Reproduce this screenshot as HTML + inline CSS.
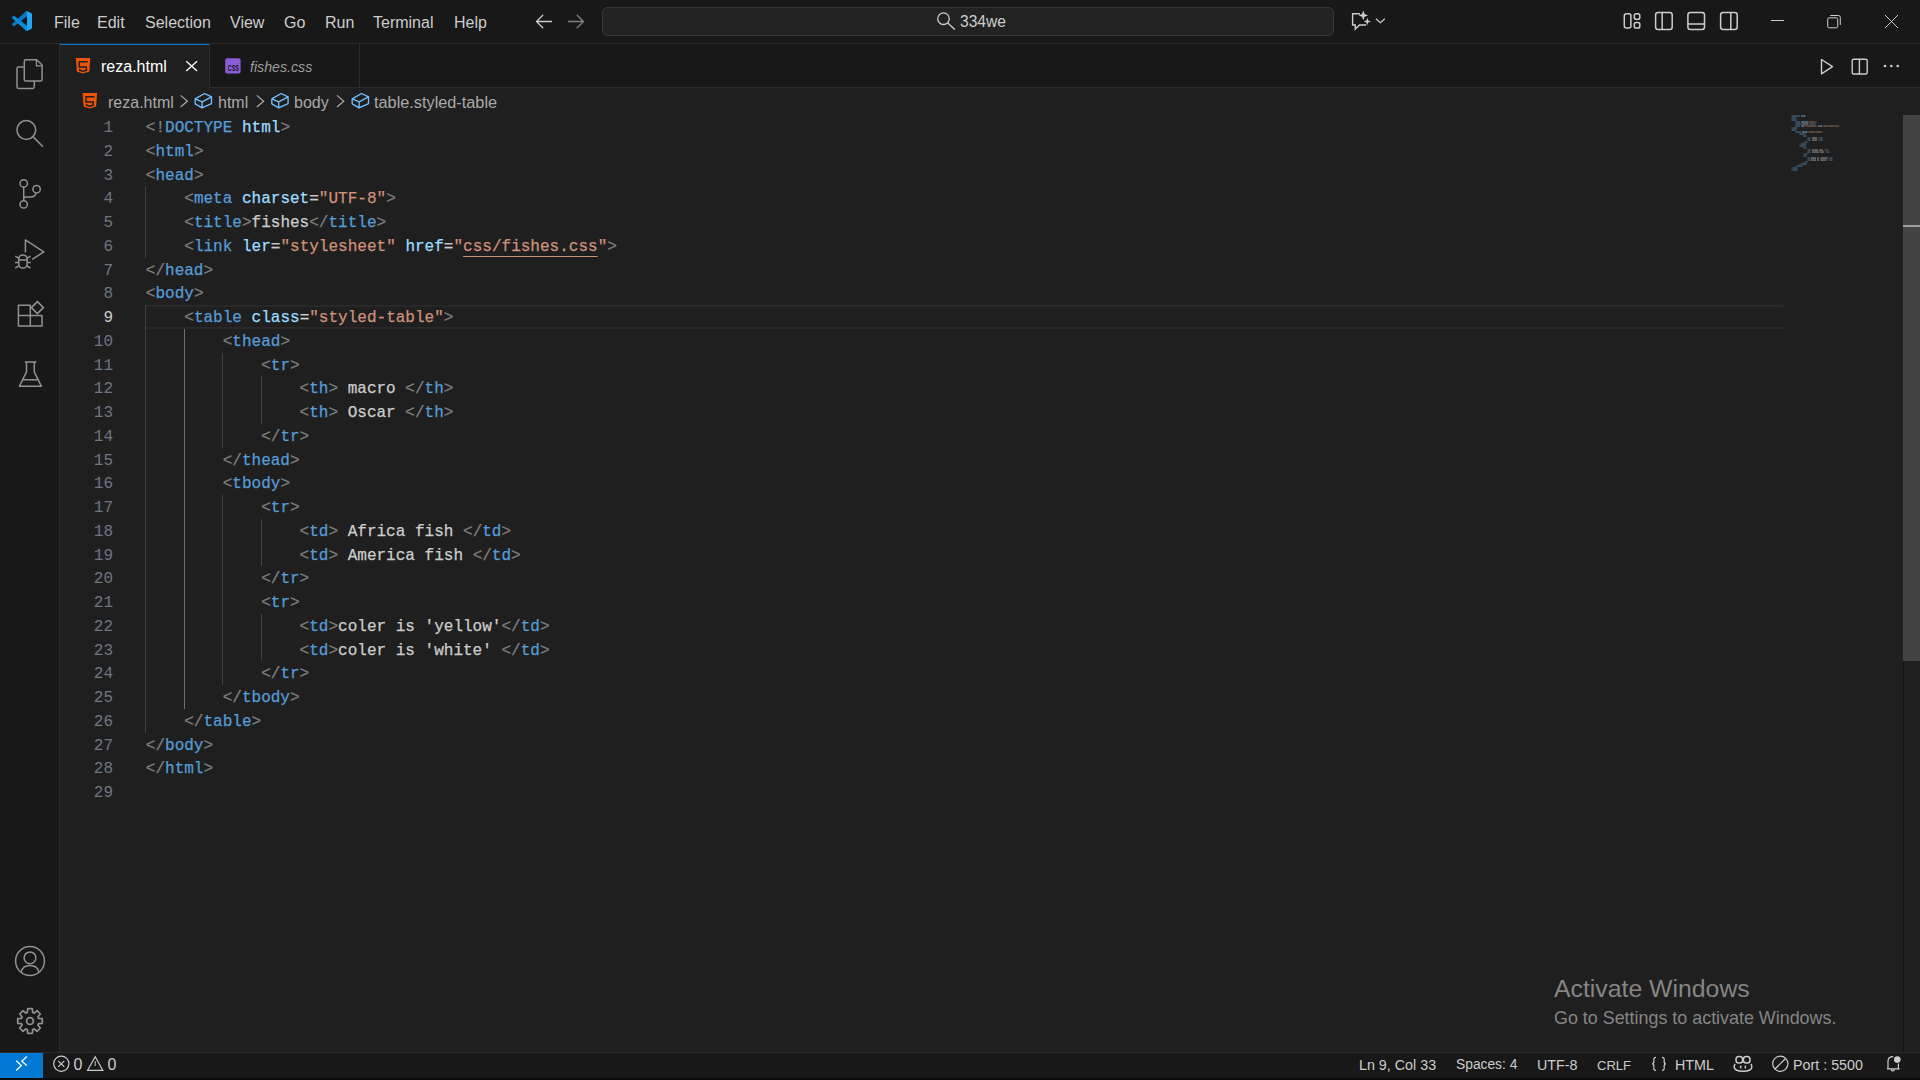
<!DOCTYPE html>
<html>
<head>
<meta charset="utf-8">
<title>reza.html - VS Code</title>
<style>
*{margin:0;padding:0;box-sizing:border-box}
html,body{width:1920px;height:1080px;overflow:hidden;background:#1f1f1f;font-family:"Liberation Sans",sans-serif;color:#cccccc}
.abs{position:absolute}
.txt{position:absolute;white-space:pre;line-height:1}
#title{left:0;top:0;width:1920px;height:44px;background:#181818;border-bottom:1px solid #2b2b2b}
#act{left:0;top:44px;width:60px;height:1008px;background:#181818;border-right:1px solid #2b2b2b}
#tabs{left:60px;top:44px;width:1860px;height:44px;background:#181818;border-bottom:1px solid #2b2b2b}
#tab1{left:60px;top:44px;width:150px;height:44px;background:#1f1f1f;border-top:1px solid #0078d4;border-right:1px solid #2b2b2b}
#tab2{left:210px;top:44px;width:150px;height:44px;background:#181818;border-right:1px solid #2b2b2b;border-bottom:1px solid #2b2b2b}
#status{left:0;top:1052px;width:1920px;height:26px;background:#181818;border-top:1px solid #2b2b2b}
#remote{left:0;top:1053px;width:43px;height:25px;background:#0078d4}
#bottomstrip{left:0;top:1078px;width:1920px;height:2px;background:#0a0a0a}
#search{left:602px;top:7px;width:732px;height:29px;background:#222222;border:1px solid #383838;border-radius:6px}
#code{position:absolute;left:145.8px;top:117.2px;-webkit-text-stroke:0.25px currentColor;font-family:"Liberation Mono",monospace;font-size:16.03px;line-height:23.75px;white-space:pre;color:#cccccc}
#nums{position:absolute;left:60px;width:53px;top:117.2px;font-family:"Liberation Mono",monospace;font-size:16.03px;line-height:23.75px;white-space:pre;color:#6e7681;text-align:right}
.an{color:#cccccc}
.p{color:#808080}.t{color:#569cd6}.a{color:#9cdcfe}.s{color:#ce9178}.w{color:#cccccc}
.u{text-decoration:underline;text-underline-offset:4.7px;text-decoration-thickness:1px}
.g{position:absolute;width:1px;background:#404040;margin-left:-0.6px}
.ga{background:#707070}
#hl{left:146px;top:305px;width:1637px;height:24px;border-top:2px solid #282828;border-bottom:2px solid #282828}
#slider{left:1903px;top:115px;width:17px;height:546px;background:#434343}
#ruler{left:1903px;top:115px;width:1px;height:937px;background:#111318}
.menu{top:15px;font-size:16px;color:#cccccc}
.wm{color:#858585}
</style>
</head>
<body>
<div id="title" class="abs"></div>
<div id="act" class="abs"></div>
<div id="tabs" class="abs"></div>
<div id="tab1" class="abs"></div>
<div id="tab2" class="abs"></div>
<div id="status" class="abs"></div>
<div id="remote" class="abs"></div>
<div id="bottomstrip" class="abs"></div>
<div id="search" class="abs"></div>

<!-- menu -->
<div class="txt menu" style="left:54px">File</div>
<div class="txt menu" style="left:97px">Edit</div>
<div class="txt menu" style="left:145px">Selection</div>
<div class="txt menu" style="left:230px">View</div>
<div class="txt menu" style="left:284px">Go</div>
<div class="txt menu" style="left:325px">Run</div>
<div class="txt menu" style="left:373px">Terminal</div>
<div class="txt menu" style="left:454px">Help</div>
<div class="txt" style="left:960px;top:13.6px;font-size:15.6px;color:#cccccc">334we</div>

<!-- tabs -->
<div class="txt" style="left:101px;top:59px;font-size:16px;color:#ffffff">reza.html</div>
<div class="txt" style="left:250px;top:59.8px;font-size:14.2px;font-style:italic;color:#9d9d9d">fishes.css</div>

<!-- breadcrumbs -->
<div class="txt" style="left:108px;top:94.5px;font-size:16px;color:#a9a9a9">reza.html</div>
<div class="txt" style="left:218px;top:94.5px;font-size:16px;color:#a9a9a9">html</div>
<div class="txt" style="left:294px;top:94.5px;font-size:16px;color:#a9a9a9">body</div>
<div class="txt" style="left:374px;top:94.3px;font-size:16.3px;color:#a9a9a9">table.styled-table</div>

<!-- editor -->
<div id="hl" class="abs"></div>
<div class="g" style="left:146.00px;top:186.25px;height:71.25px"></div>
<div class="g" style="left:146.00px;top:305.00px;height:427.50px"></div>
<div class="g ga" style="left:184.48px;top:328.75px;height:380.00px"></div>
<div class="g" style="left:222.96px;top:352.50px;height:95.00px"></div>
<div class="g" style="left:222.96px;top:495.00px;height:190.00px"></div>
<div class="g" style="left:261.44px;top:376.25px;height:47.50px"></div>
<div class="g" style="left:261.44px;top:518.75px;height:47.50px"></div>
<div class="g" style="left:261.44px;top:613.75px;height:47.50px"></div>
<div id="nums">1
2
3
4
5
6
7
8
<span class="an">9</span>
10
11
12
13
14
15
16
17
18
19
20
21
22
23
24
25
26
27
28
29</div>
<div id="code"><span class="p">&lt;!</span><span class="t">DOCTYPE</span> <span class="a">html</span><span class="p">&gt;</span>
<span class="p">&lt;</span><span class="t">html</span><span class="p">&gt;</span>
<span class="p">&lt;</span><span class="t">head</span><span class="p">&gt;</span>
    <span class="p">&lt;</span><span class="t">meta</span> <span class="a">charset</span><span class="w">=</span><span class="s">"UTF-8"</span><span class="p">&gt;</span>
    <span class="p">&lt;</span><span class="t">title</span><span class="p">&gt;</span><span class="w">fishes</span><span class="p">&lt;/</span><span class="t">title</span><span class="p">&gt;</span>
    <span class="p">&lt;</span><span class="t">link</span> <span class="a">ler</span><span class="w">=</span><span class="s">"stylesheet"</span> <span class="a">href</span><span class="w">=</span><span class="s">"</span><span class="s u">css/fishes.css</span><span class="s">"</span><span class="p">&gt;</span>
<span class="p">&lt;/</span><span class="t">head</span><span class="p">&gt;</span>
<span class="p">&lt;</span><span class="t">body</span><span class="p">&gt;</span>
    <span class="p">&lt;</span><span class="t">table</span> <span class="a">class</span><span class="w">=</span><span class="s">"styled-table"</span><span class="p">&gt;</span>
        <span class="p">&lt;</span><span class="t">thead</span><span class="p">&gt;</span>
            <span class="p">&lt;</span><span class="t">tr</span><span class="p">&gt;</span>
                <span class="p">&lt;</span><span class="t">th</span><span class="p">&gt;</span><span class="w"> macro </span><span class="p">&lt;/</span><span class="t">th</span><span class="p">&gt;</span>
                <span class="p">&lt;</span><span class="t">th</span><span class="p">&gt;</span><span class="w"> Oscar </span><span class="p">&lt;/</span><span class="t">th</span><span class="p">&gt;</span>
            <span class="p">&lt;/</span><span class="t">tr</span><span class="p">&gt;</span>
        <span class="p">&lt;/</span><span class="t">thead</span><span class="p">&gt;</span>
        <span class="p">&lt;</span><span class="t">tbody</span><span class="p">&gt;</span>
            <span class="p">&lt;</span><span class="t">tr</span><span class="p">&gt;</span>
                <span class="p">&lt;</span><span class="t">td</span><span class="p">&gt;</span><span class="w"> Africa fish </span><span class="p">&lt;/</span><span class="t">td</span><span class="p">&gt;</span>
                <span class="p">&lt;</span><span class="t">td</span><span class="p">&gt;</span><span class="w"> America fish </span><span class="p">&lt;/</span><span class="t">td</span><span class="p">&gt;</span>
            <span class="p">&lt;/</span><span class="t">tr</span><span class="p">&gt;</span>
            <span class="p">&lt;</span><span class="t">tr</span><span class="p">&gt;</span>
                <span class="p">&lt;</span><span class="t">td</span><span class="p">&gt;</span><span class="w">coler is 'yellow'</span><span class="p">&lt;/</span><span class="t">td</span><span class="p">&gt;</span>
                <span class="p">&lt;</span><span class="t">td</span><span class="p">&gt;</span><span class="w">coler is 'white' </span><span class="p">&lt;/</span><span class="t">td</span><span class="p">&gt;</span>
            <span class="p">&lt;/</span><span class="t">tr</span><span class="p">&gt;</span>
        <span class="p">&lt;/</span><span class="t">tbody</span><span class="p">&gt;</span>
    <span class="p">&lt;/</span><span class="t">table</span><span class="p">&gt;</span>
<span class="p">&lt;/</span><span class="t">body</span><span class="p">&gt;</span>
<span class="p">&lt;/</span><span class="t">html</span><span class="p">&gt;</span>
</div>
<svg class="abs" style="left:1791px;top:115px;opacity:.55" width="80" height="60"><rect x="0.1" y="0.6" width="0.85" height="0.9" fill="#808080"/><rect x="1.1" y="0.3" width="0.85" height="1.5" fill="#808080"/><rect x="2.0" y="0.3" width="0.85" height="1.5" fill="#569cd6"/><rect x="3.0" y="0.3" width="0.85" height="1.5" fill="#569cd6"/><rect x="4.0" y="0.3" width="0.85" height="1.5" fill="#569cd6"/><rect x="5.0" y="0.3" width="0.85" height="1.5" fill="#569cd6"/><rect x="6.0" y="0.3" width="0.85" height="1.5" fill="#569cd6"/><rect x="7.0" y="0.3" width="0.85" height="1.5" fill="#569cd6"/><rect x="8.1" y="0.3" width="0.85" height="1.5" fill="#569cd6"/><rect x="10.1" y="0.3" width="0.85" height="1.5" fill="#9cdcfe"/><rect x="11.1" y="0.3" width="0.85" height="1.5" fill="#9cdcfe"/><rect x="12.1" y="0.3" width="0.85" height="1.5" fill="#9cdcfe"/><rect x="13.1" y="0.3" width="0.85" height="1.5" fill="#9cdcfe"/><rect x="14.1" y="0.6" width="0.85" height="0.9" fill="#808080"/><rect x="0.1" y="2.6" width="0.85" height="0.9" fill="#808080"/><rect x="1.1" y="2.3" width="0.85" height="1.5" fill="#569cd6"/><rect x="2.0" y="2.3" width="0.85" height="1.5" fill="#569cd6"/><rect x="3.0" y="2.3" width="0.85" height="1.5" fill="#569cd6"/><rect x="4.0" y="2.3" width="0.85" height="1.5" fill="#569cd6"/><rect x="5.0" y="2.6" width="0.85" height="0.9" fill="#808080"/><rect x="0.1" y="4.6" width="0.85" height="0.9" fill="#808080"/><rect x="1.1" y="4.3" width="0.85" height="1.5" fill="#569cd6"/><rect x="2.0" y="4.3" width="0.85" height="1.5" fill="#569cd6"/><rect x="3.0" y="4.3" width="0.85" height="1.5" fill="#569cd6"/><rect x="4.0" y="4.3" width="0.85" height="1.5" fill="#569cd6"/><rect x="5.0" y="4.6" width="0.85" height="0.9" fill="#808080"/><rect x="4.0" y="6.6" width="0.85" height="0.9" fill="#808080"/><rect x="5.0" y="6.3" width="0.85" height="1.5" fill="#569cd6"/><rect x="6.0" y="6.3" width="0.85" height="1.5" fill="#569cd6"/><rect x="7.0" y="6.3" width="0.85" height="1.5" fill="#569cd6"/><rect x="8.1" y="6.3" width="0.85" height="1.5" fill="#569cd6"/><rect x="10.1" y="6.3" width="0.85" height="1.5" fill="#9cdcfe"/><rect x="11.1" y="6.3" width="0.85" height="1.5" fill="#9cdcfe"/><rect x="12.1" y="6.3" width="0.85" height="1.5" fill="#9cdcfe"/><rect x="13.1" y="6.3" width="0.85" height="1.5" fill="#9cdcfe"/><rect x="14.1" y="6.3" width="0.85" height="1.5" fill="#9cdcfe"/><rect x="15.1" y="6.3" width="0.85" height="1.5" fill="#9cdcfe"/><rect x="16.1" y="6.3" width="0.85" height="1.5" fill="#9cdcfe"/><rect x="17.1" y="6.6" width="0.85" height="0.9" fill="#cccccc"/><rect x="18.1" y="6.6" width="0.85" height="0.9" fill="#ce9178"/><rect x="19.1" y="6.3" width="0.85" height="1.5" fill="#ce9178"/><rect x="20.1" y="6.3" width="0.85" height="1.5" fill="#ce9178"/><rect x="21.1" y="6.3" width="0.85" height="1.5" fill="#ce9178"/><rect x="22.1" y="6.6" width="0.85" height="0.9" fill="#ce9178"/><rect x="23.1" y="6.3" width="0.85" height="1.5" fill="#ce9178"/><rect x="24.1" y="6.6" width="0.85" height="0.9" fill="#ce9178"/><rect x="25.1" y="6.6" width="0.85" height="0.9" fill="#808080"/><rect x="4.0" y="8.6" width="0.85" height="0.9" fill="#808080"/><rect x="5.0" y="8.3" width="0.85" height="1.5" fill="#569cd6"/><rect x="6.0" y="8.3" width="0.85" height="1.5" fill="#569cd6"/><rect x="7.0" y="8.3" width="0.85" height="1.5" fill="#569cd6"/><rect x="8.1" y="8.3" width="0.85" height="1.5" fill="#569cd6"/><rect x="9.1" y="8.3" width="0.85" height="1.5" fill="#569cd6"/><rect x="10.1" y="8.6" width="0.85" height="0.9" fill="#808080"/><rect x="11.1" y="8.3" width="0.85" height="1.5" fill="#cccccc"/><rect x="12.1" y="8.3" width="0.85" height="1.5" fill="#cccccc"/><rect x="13.1" y="8.3" width="0.85" height="1.5" fill="#cccccc"/><rect x="14.1" y="8.3" width="0.85" height="1.5" fill="#cccccc"/><rect x="15.1" y="8.3" width="0.85" height="1.5" fill="#cccccc"/><rect x="16.1" y="8.3" width="0.85" height="1.5" fill="#cccccc"/><rect x="17.1" y="8.6" width="0.85" height="0.9" fill="#808080"/><rect x="18.1" y="8.6" width="0.85" height="0.9" fill="#808080"/><rect x="19.1" y="8.3" width="0.85" height="1.5" fill="#569cd6"/><rect x="20.1" y="8.3" width="0.85" height="1.5" fill="#569cd6"/><rect x="21.1" y="8.3" width="0.85" height="1.5" fill="#569cd6"/><rect x="22.1" y="8.3" width="0.85" height="1.5" fill="#569cd6"/><rect x="23.1" y="8.3" width="0.85" height="1.5" fill="#569cd6"/><rect x="24.1" y="8.6" width="0.85" height="0.9" fill="#808080"/><rect x="4.0" y="10.6" width="0.85" height="0.9" fill="#808080"/><rect x="5.0" y="10.3" width="0.85" height="1.5" fill="#569cd6"/><rect x="6.0" y="10.3" width="0.85" height="1.5" fill="#569cd6"/><rect x="7.0" y="10.3" width="0.85" height="1.5" fill="#569cd6"/><rect x="8.1" y="10.3" width="0.85" height="1.5" fill="#569cd6"/><rect x="10.1" y="10.3" width="0.85" height="1.5" fill="#9cdcfe"/><rect x="11.1" y="10.3" width="0.85" height="1.5" fill="#9cdcfe"/><rect x="12.1" y="10.3" width="0.85" height="1.5" fill="#9cdcfe"/><rect x="13.1" y="10.6" width="0.85" height="0.9" fill="#cccccc"/><rect x="14.1" y="10.6" width="0.85" height="0.9" fill="#ce9178"/><rect x="15.1" y="10.3" width="0.85" height="1.5" fill="#ce9178"/><rect x="16.1" y="10.3" width="0.85" height="1.5" fill="#ce9178"/><rect x="17.1" y="10.3" width="0.85" height="1.5" fill="#ce9178"/><rect x="18.1" y="10.3" width="0.85" height="1.5" fill="#ce9178"/><rect x="19.1" y="10.3" width="0.85" height="1.5" fill="#ce9178"/><rect x="20.1" y="10.3" width="0.85" height="1.5" fill="#ce9178"/><rect x="21.1" y="10.3" width="0.85" height="1.5" fill="#ce9178"/><rect x="22.1" y="10.3" width="0.85" height="1.5" fill="#ce9178"/><rect x="23.1" y="10.3" width="0.85" height="1.5" fill="#ce9178"/><rect x="24.1" y="10.3" width="0.85" height="1.5" fill="#ce9178"/><rect x="25.1" y="10.6" width="0.85" height="0.9" fill="#ce9178"/><rect x="27.1" y="10.3" width="0.85" height="1.5" fill="#9cdcfe"/><rect x="28.1" y="10.3" width="0.85" height="1.5" fill="#9cdcfe"/><rect x="29.1" y="10.3" width="0.85" height="1.5" fill="#9cdcfe"/><rect x="30.1" y="10.3" width="0.85" height="1.5" fill="#9cdcfe"/><rect x="31.1" y="10.6" width="0.85" height="0.9" fill="#cccccc"/><rect x="32.0" y="10.6" width="0.85" height="0.9" fill="#ce9178"/><rect x="33.0" y="10.3" width="0.85" height="1.5" fill="#ce9178"/><rect x="34.0" y="10.3" width="0.85" height="1.5" fill="#ce9178"/><rect x="35.0" y="10.3" width="0.85" height="1.5" fill="#ce9178"/><rect x="36.0" y="10.6" width="0.85" height="0.9" fill="#ce9178"/><rect x="37.0" y="10.3" width="0.85" height="1.5" fill="#ce9178"/><rect x="38.0" y="10.3" width="0.85" height="1.5" fill="#ce9178"/><rect x="39.0" y="10.3" width="0.85" height="1.5" fill="#ce9178"/><rect x="40.0" y="10.3" width="0.85" height="1.5" fill="#ce9178"/><rect x="41.0" y="10.3" width="0.85" height="1.5" fill="#ce9178"/><rect x="42.0" y="10.3" width="0.85" height="1.5" fill="#ce9178"/><rect x="43.0" y="10.6" width="0.85" height="0.9" fill="#ce9178"/><rect x="44.0" y="10.3" width="0.85" height="1.5" fill="#ce9178"/><rect x="45.0" y="10.3" width="0.85" height="1.5" fill="#ce9178"/><rect x="46.0" y="10.3" width="0.85" height="1.5" fill="#ce9178"/><rect x="47.0" y="10.6" width="0.85" height="0.9" fill="#ce9178"/><rect x="48.0" y="10.6" width="0.85" height="0.9" fill="#808080"/><rect x="0.1" y="12.6" width="0.85" height="0.9" fill="#808080"/><rect x="1.1" y="12.6" width="0.85" height="0.9" fill="#808080"/><rect x="2.0" y="12.3" width="0.85" height="1.5" fill="#569cd6"/><rect x="3.0" y="12.3" width="0.85" height="1.5" fill="#569cd6"/><rect x="4.0" y="12.3" width="0.85" height="1.5" fill="#569cd6"/><rect x="5.0" y="12.3" width="0.85" height="1.5" fill="#569cd6"/><rect x="6.0" y="12.6" width="0.85" height="0.9" fill="#808080"/><rect x="0.1" y="14.6" width="0.85" height="0.9" fill="#808080"/><rect x="1.1" y="14.3" width="0.85" height="1.5" fill="#569cd6"/><rect x="2.0" y="14.3" width="0.85" height="1.5" fill="#569cd6"/><rect x="3.0" y="14.3" width="0.85" height="1.5" fill="#569cd6"/><rect x="4.0" y="14.3" width="0.85" height="1.5" fill="#569cd6"/><rect x="5.0" y="14.6" width="0.85" height="0.9" fill="#808080"/><rect x="4.0" y="16.6" width="0.85" height="0.9" fill="#808080"/><rect x="5.0" y="16.3" width="0.85" height="1.5" fill="#569cd6"/><rect x="6.0" y="16.3" width="0.85" height="1.5" fill="#569cd6"/><rect x="7.0" y="16.3" width="0.85" height="1.5" fill="#569cd6"/><rect x="8.1" y="16.3" width="0.85" height="1.5" fill="#569cd6"/><rect x="9.1" y="16.3" width="0.85" height="1.5" fill="#569cd6"/><rect x="11.1" y="16.3" width="0.85" height="1.5" fill="#9cdcfe"/><rect x="12.1" y="16.3" width="0.85" height="1.5" fill="#9cdcfe"/><rect x="13.1" y="16.3" width="0.85" height="1.5" fill="#9cdcfe"/><rect x="14.1" y="16.3" width="0.85" height="1.5" fill="#9cdcfe"/><rect x="15.1" y="16.3" width="0.85" height="1.5" fill="#9cdcfe"/><rect x="16.1" y="16.6" width="0.85" height="0.9" fill="#cccccc"/><rect x="17.1" y="16.6" width="0.85" height="0.9" fill="#ce9178"/><rect x="18.1" y="16.3" width="0.85" height="1.5" fill="#ce9178"/><rect x="19.1" y="16.3" width="0.85" height="1.5" fill="#ce9178"/><rect x="20.1" y="16.3" width="0.85" height="1.5" fill="#ce9178"/><rect x="21.1" y="16.3" width="0.85" height="1.5" fill="#ce9178"/><rect x="22.1" y="16.3" width="0.85" height="1.5" fill="#ce9178"/><rect x="23.1" y="16.3" width="0.85" height="1.5" fill="#ce9178"/><rect x="24.1" y="16.6" width="0.85" height="0.9" fill="#ce9178"/><rect x="25.1" y="16.3" width="0.85" height="1.5" fill="#ce9178"/><rect x="26.1" y="16.3" width="0.85" height="1.5" fill="#ce9178"/><rect x="27.1" y="16.3" width="0.85" height="1.5" fill="#ce9178"/><rect x="28.1" y="16.3" width="0.85" height="1.5" fill="#ce9178"/><rect x="29.1" y="16.3" width="0.85" height="1.5" fill="#ce9178"/><rect x="30.1" y="16.6" width="0.85" height="0.9" fill="#ce9178"/><rect x="31.1" y="16.6" width="0.85" height="0.9" fill="#808080"/><rect x="8.1" y="18.6" width="0.85" height="0.9" fill="#808080"/><rect x="9.1" y="18.3" width="0.85" height="1.5" fill="#569cd6"/><rect x="10.1" y="18.3" width="0.85" height="1.5" fill="#569cd6"/><rect x="11.1" y="18.3" width="0.85" height="1.5" fill="#569cd6"/><rect x="12.1" y="18.3" width="0.85" height="1.5" fill="#569cd6"/><rect x="13.1" y="18.3" width="0.85" height="1.5" fill="#569cd6"/><rect x="14.1" y="18.6" width="0.85" height="0.9" fill="#808080"/><rect x="12.1" y="20.6" width="0.85" height="0.9" fill="#808080"/><rect x="13.1" y="20.3" width="0.85" height="1.5" fill="#569cd6"/><rect x="14.1" y="20.3" width="0.85" height="1.5" fill="#569cd6"/><rect x="15.1" y="20.6" width="0.85" height="0.9" fill="#808080"/><rect x="16.1" y="22.6" width="0.85" height="0.9" fill="#808080"/><rect x="17.1" y="22.3" width="0.85" height="1.5" fill="#569cd6"/><rect x="18.1" y="22.3" width="0.85" height="1.5" fill="#569cd6"/><rect x="19.1" y="22.6" width="0.85" height="0.9" fill="#808080"/><rect x="21.1" y="22.3" width="0.85" height="1.5" fill="#cccccc"/><rect x="22.1" y="22.3" width="0.85" height="1.5" fill="#cccccc"/><rect x="23.1" y="22.3" width="0.85" height="1.5" fill="#cccccc"/><rect x="24.1" y="22.3" width="0.85" height="1.5" fill="#cccccc"/><rect x="25.1" y="22.3" width="0.85" height="1.5" fill="#cccccc"/><rect x="27.1" y="22.6" width="0.85" height="0.9" fill="#808080"/><rect x="28.1" y="22.6" width="0.85" height="0.9" fill="#808080"/><rect x="29.1" y="22.3" width="0.85" height="1.5" fill="#569cd6"/><rect x="30.1" y="22.3" width="0.85" height="1.5" fill="#569cd6"/><rect x="31.1" y="22.6" width="0.85" height="0.9" fill="#808080"/><rect x="16.1" y="24.6" width="0.85" height="0.9" fill="#808080"/><rect x="17.1" y="24.3" width="0.85" height="1.5" fill="#569cd6"/><rect x="18.1" y="24.3" width="0.85" height="1.5" fill="#569cd6"/><rect x="19.1" y="24.6" width="0.85" height="0.9" fill="#808080"/><rect x="21.1" y="24.3" width="0.85" height="1.5" fill="#cccccc"/><rect x="22.1" y="24.3" width="0.85" height="1.5" fill="#cccccc"/><rect x="23.1" y="24.3" width="0.85" height="1.5" fill="#cccccc"/><rect x="24.1" y="24.3" width="0.85" height="1.5" fill="#cccccc"/><rect x="25.1" y="24.3" width="0.85" height="1.5" fill="#cccccc"/><rect x="27.1" y="24.6" width="0.85" height="0.9" fill="#808080"/><rect x="28.1" y="24.6" width="0.85" height="0.9" fill="#808080"/><rect x="29.1" y="24.3" width="0.85" height="1.5" fill="#569cd6"/><rect x="30.1" y="24.3" width="0.85" height="1.5" fill="#569cd6"/><rect x="31.1" y="24.6" width="0.85" height="0.9" fill="#808080"/><rect x="12.1" y="26.6" width="0.85" height="0.9" fill="#808080"/><rect x="13.1" y="26.6" width="0.85" height="0.9" fill="#808080"/><rect x="14.1" y="26.3" width="0.85" height="1.5" fill="#569cd6"/><rect x="15.1" y="26.3" width="0.85" height="1.5" fill="#569cd6"/><rect x="16.1" y="26.6" width="0.85" height="0.9" fill="#808080"/><rect x="8.1" y="28.6" width="0.85" height="0.9" fill="#808080"/><rect x="9.1" y="28.6" width="0.85" height="0.9" fill="#808080"/><rect x="10.1" y="28.3" width="0.85" height="1.5" fill="#569cd6"/><rect x="11.1" y="28.3" width="0.85" height="1.5" fill="#569cd6"/><rect x="12.1" y="28.3" width="0.85" height="1.5" fill="#569cd6"/><rect x="13.1" y="28.3" width="0.85" height="1.5" fill="#569cd6"/><rect x="14.1" y="28.3" width="0.85" height="1.5" fill="#569cd6"/><rect x="15.1" y="28.6" width="0.85" height="0.9" fill="#808080"/><rect x="8.1" y="30.6" width="0.85" height="0.9" fill="#808080"/><rect x="9.1" y="30.3" width="0.85" height="1.5" fill="#569cd6"/><rect x="10.1" y="30.3" width="0.85" height="1.5" fill="#569cd6"/><rect x="11.1" y="30.3" width="0.85" height="1.5" fill="#569cd6"/><rect x="12.1" y="30.3" width="0.85" height="1.5" fill="#569cd6"/><rect x="13.1" y="30.3" width="0.85" height="1.5" fill="#569cd6"/><rect x="14.1" y="30.6" width="0.85" height="0.9" fill="#808080"/><rect x="12.1" y="32.6" width="0.85" height="0.9" fill="#808080"/><rect x="13.1" y="32.3" width="0.85" height="1.5" fill="#569cd6"/><rect x="14.1" y="32.3" width="0.85" height="1.5" fill="#569cd6"/><rect x="15.1" y="32.6" width="0.85" height="0.9" fill="#808080"/><rect x="16.1" y="34.6" width="0.85" height="0.9" fill="#808080"/><rect x="17.1" y="34.3" width="0.85" height="1.5" fill="#569cd6"/><rect x="18.1" y="34.3" width="0.85" height="1.5" fill="#569cd6"/><rect x="19.1" y="34.6" width="0.85" height="0.9" fill="#808080"/><rect x="21.1" y="34.3" width="0.85" height="1.5" fill="#cccccc"/><rect x="22.1" y="34.3" width="0.85" height="1.5" fill="#cccccc"/><rect x="23.1" y="34.3" width="0.85" height="1.5" fill="#cccccc"/><rect x="24.1" y="34.3" width="0.85" height="1.5" fill="#cccccc"/><rect x="25.1" y="34.3" width="0.85" height="1.5" fill="#cccccc"/><rect x="26.1" y="34.3" width="0.85" height="1.5" fill="#cccccc"/><rect x="28.1" y="34.3" width="0.85" height="1.5" fill="#cccccc"/><rect x="29.1" y="34.3" width="0.85" height="1.5" fill="#cccccc"/><rect x="30.1" y="34.3" width="0.85" height="1.5" fill="#cccccc"/><rect x="31.1" y="34.3" width="0.85" height="1.5" fill="#cccccc"/><rect x="33.0" y="34.6" width="0.85" height="0.9" fill="#808080"/><rect x="34.0" y="34.6" width="0.85" height="0.9" fill="#808080"/><rect x="35.0" y="34.3" width="0.85" height="1.5" fill="#569cd6"/><rect x="36.0" y="34.3" width="0.85" height="1.5" fill="#569cd6"/><rect x="37.0" y="34.6" width="0.85" height="0.9" fill="#808080"/><rect x="16.1" y="36.6" width="0.85" height="0.9" fill="#808080"/><rect x="17.1" y="36.3" width="0.85" height="1.5" fill="#569cd6"/><rect x="18.1" y="36.3" width="0.85" height="1.5" fill="#569cd6"/><rect x="19.1" y="36.6" width="0.85" height="0.9" fill="#808080"/><rect x="21.1" y="36.3" width="0.85" height="1.5" fill="#cccccc"/><rect x="22.1" y="36.3" width="0.85" height="1.5" fill="#cccccc"/><rect x="23.1" y="36.3" width="0.85" height="1.5" fill="#cccccc"/><rect x="24.1" y="36.3" width="0.85" height="1.5" fill="#cccccc"/><rect x="25.1" y="36.3" width="0.85" height="1.5" fill="#cccccc"/><rect x="26.1" y="36.3" width="0.85" height="1.5" fill="#cccccc"/><rect x="27.1" y="36.3" width="0.85" height="1.5" fill="#cccccc"/><rect x="29.1" y="36.3" width="0.85" height="1.5" fill="#cccccc"/><rect x="30.1" y="36.3" width="0.85" height="1.5" fill="#cccccc"/><rect x="31.1" y="36.3" width="0.85" height="1.5" fill="#cccccc"/><rect x="32.0" y="36.3" width="0.85" height="1.5" fill="#cccccc"/><rect x="34.0" y="36.6" width="0.85" height="0.9" fill="#808080"/><rect x="35.0" y="36.6" width="0.85" height="0.9" fill="#808080"/><rect x="36.0" y="36.3" width="0.85" height="1.5" fill="#569cd6"/><rect x="37.0" y="36.3" width="0.85" height="1.5" fill="#569cd6"/><rect x="38.0" y="36.6" width="0.85" height="0.9" fill="#808080"/><rect x="12.1" y="38.6" width="0.85" height="0.9" fill="#808080"/><rect x="13.1" y="38.6" width="0.85" height="0.9" fill="#808080"/><rect x="14.1" y="38.3" width="0.85" height="1.5" fill="#569cd6"/><rect x="15.1" y="38.3" width="0.85" height="1.5" fill="#569cd6"/><rect x="16.1" y="38.6" width="0.85" height="0.9" fill="#808080"/><rect x="12.1" y="40.6" width="0.85" height="0.9" fill="#808080"/><rect x="13.1" y="40.3" width="0.85" height="1.5" fill="#569cd6"/><rect x="14.1" y="40.3" width="0.85" height="1.5" fill="#569cd6"/><rect x="15.1" y="40.6" width="0.85" height="0.9" fill="#808080"/><rect x="16.1" y="42.6" width="0.85" height="0.9" fill="#808080"/><rect x="17.1" y="42.3" width="0.85" height="1.5" fill="#569cd6"/><rect x="18.1" y="42.3" width="0.85" height="1.5" fill="#569cd6"/><rect x="19.1" y="42.6" width="0.85" height="0.9" fill="#808080"/><rect x="20.1" y="42.3" width="0.85" height="1.5" fill="#cccccc"/><rect x="21.1" y="42.3" width="0.85" height="1.5" fill="#cccccc"/><rect x="22.1" y="42.3" width="0.85" height="1.5" fill="#cccccc"/><rect x="23.1" y="42.3" width="0.85" height="1.5" fill="#cccccc"/><rect x="24.1" y="42.3" width="0.85" height="1.5" fill="#cccccc"/><rect x="26.1" y="42.3" width="0.85" height="1.5" fill="#cccccc"/><rect x="27.1" y="42.3" width="0.85" height="1.5" fill="#cccccc"/><rect x="29.1" y="42.6" width="0.85" height="0.9" fill="#cccccc"/><rect x="30.1" y="42.3" width="0.85" height="1.5" fill="#cccccc"/><rect x="31.1" y="42.3" width="0.85" height="1.5" fill="#cccccc"/><rect x="32.0" y="42.3" width="0.85" height="1.5" fill="#cccccc"/><rect x="33.0" y="42.3" width="0.85" height="1.5" fill="#cccccc"/><rect x="34.0" y="42.3" width="0.85" height="1.5" fill="#cccccc"/><rect x="35.0" y="42.3" width="0.85" height="1.5" fill="#cccccc"/><rect x="36.0" y="42.6" width="0.85" height="0.9" fill="#cccccc"/><rect x="37.0" y="42.6" width="0.85" height="0.9" fill="#808080"/><rect x="38.0" y="42.6" width="0.85" height="0.9" fill="#808080"/><rect x="39.0" y="42.3" width="0.85" height="1.5" fill="#569cd6"/><rect x="40.0" y="42.3" width="0.85" height="1.5" fill="#569cd6"/><rect x="41.0" y="42.6" width="0.85" height="0.9" fill="#808080"/><rect x="16.1" y="44.6" width="0.85" height="0.9" fill="#808080"/><rect x="17.1" y="44.3" width="0.85" height="1.5" fill="#569cd6"/><rect x="18.1" y="44.3" width="0.85" height="1.5" fill="#569cd6"/><rect x="19.1" y="44.6" width="0.85" height="0.9" fill="#808080"/><rect x="20.1" y="44.3" width="0.85" height="1.5" fill="#cccccc"/><rect x="21.1" y="44.3" width="0.85" height="1.5" fill="#cccccc"/><rect x="22.1" y="44.3" width="0.85" height="1.5" fill="#cccccc"/><rect x="23.1" y="44.3" width="0.85" height="1.5" fill="#cccccc"/><rect x="24.1" y="44.3" width="0.85" height="1.5" fill="#cccccc"/><rect x="26.1" y="44.3" width="0.85" height="1.5" fill="#cccccc"/><rect x="27.1" y="44.3" width="0.85" height="1.5" fill="#cccccc"/><rect x="29.1" y="44.6" width="0.85" height="0.9" fill="#cccccc"/><rect x="30.1" y="44.3" width="0.85" height="1.5" fill="#cccccc"/><rect x="31.1" y="44.3" width="0.85" height="1.5" fill="#cccccc"/><rect x="32.0" y="44.3" width="0.85" height="1.5" fill="#cccccc"/><rect x="33.0" y="44.3" width="0.85" height="1.5" fill="#cccccc"/><rect x="34.0" y="44.3" width="0.85" height="1.5" fill="#cccccc"/><rect x="35.0" y="44.6" width="0.85" height="0.9" fill="#cccccc"/><rect x="37.0" y="44.6" width="0.85" height="0.9" fill="#808080"/><rect x="38.0" y="44.6" width="0.85" height="0.9" fill="#808080"/><rect x="39.0" y="44.3" width="0.85" height="1.5" fill="#569cd6"/><rect x="40.0" y="44.3" width="0.85" height="1.5" fill="#569cd6"/><rect x="41.0" y="44.6" width="0.85" height="0.9" fill="#808080"/><rect x="12.1" y="46.6" width="0.85" height="0.9" fill="#808080"/><rect x="13.1" y="46.6" width="0.85" height="0.9" fill="#808080"/><rect x="14.1" y="46.3" width="0.85" height="1.5" fill="#569cd6"/><rect x="15.1" y="46.3" width="0.85" height="1.5" fill="#569cd6"/><rect x="16.1" y="46.6" width="0.85" height="0.9" fill="#808080"/><rect x="8.1" y="48.6" width="0.85" height="0.9" fill="#808080"/><rect x="9.1" y="48.6" width="0.85" height="0.9" fill="#808080"/><rect x="10.1" y="48.3" width="0.85" height="1.5" fill="#569cd6"/><rect x="11.1" y="48.3" width="0.85" height="1.5" fill="#569cd6"/><rect x="12.1" y="48.3" width="0.85" height="1.5" fill="#569cd6"/><rect x="13.1" y="48.3" width="0.85" height="1.5" fill="#569cd6"/><rect x="14.1" y="48.3" width="0.85" height="1.5" fill="#569cd6"/><rect x="15.1" y="48.6" width="0.85" height="0.9" fill="#808080"/><rect x="4.0" y="50.6" width="0.85" height="0.9" fill="#808080"/><rect x="5.0" y="50.6" width="0.85" height="0.9" fill="#808080"/><rect x="6.0" y="50.3" width="0.85" height="1.5" fill="#569cd6"/><rect x="7.0" y="50.3" width="0.85" height="1.5" fill="#569cd6"/><rect x="8.1" y="50.3" width="0.85" height="1.5" fill="#569cd6"/><rect x="9.1" y="50.3" width="0.85" height="1.5" fill="#569cd6"/><rect x="10.1" y="50.3" width="0.85" height="1.5" fill="#569cd6"/><rect x="11.1" y="50.6" width="0.85" height="0.9" fill="#808080"/><rect x="0.1" y="52.6" width="0.85" height="0.9" fill="#808080"/><rect x="1.1" y="52.6" width="0.85" height="0.9" fill="#808080"/><rect x="2.0" y="52.3" width="0.85" height="1.5" fill="#569cd6"/><rect x="3.0" y="52.3" width="0.85" height="1.5" fill="#569cd6"/><rect x="4.0" y="52.3" width="0.85" height="1.5" fill="#569cd6"/><rect x="5.0" y="52.3" width="0.85" height="1.5" fill="#569cd6"/><rect x="6.0" y="52.6" width="0.85" height="0.9" fill="#808080"/><rect x="0.1" y="54.6" width="0.85" height="0.9" fill="#808080"/><rect x="1.1" y="54.6" width="0.85" height="0.9" fill="#808080"/><rect x="2.0" y="54.3" width="0.85" height="1.5" fill="#569cd6"/><rect x="3.0" y="54.3" width="0.85" height="1.5" fill="#569cd6"/><rect x="4.0" y="54.3" width="0.85" height="1.5" fill="#569cd6"/><rect x="5.0" y="54.3" width="0.85" height="1.5" fill="#569cd6"/><rect x="6.0" y="54.6" width="0.85" height="0.9" fill="#808080"/></svg>
<div id="ruler" class="abs"></div>
<div id="slider" class="abs"></div>
<div class="abs" style="left:1903px;top:225px;width:17px;height:2px;background:#a0a0a0"></div>

<!-- watermark -->
<div class="txt wm" style="left:1554px;top:977px;font-size:24.8px">Activate Windows</div>
<div class="txt wm" style="left:1554px;top:1009.5px;font-size:17.9px">Go to Settings to activate Windows.</div>

<!-- status bar text -->
<div class="txt" style="left:73.5px;top:1057px;font-size:16px;color:#cccccc">0</div>
<div class="txt" style="left:107.5px;top:1057px;font-size:16px;color:#cccccc">0</div>
<div class="txt" style="left:1359px;top:1057.9px;font-size:14.3px;color:#cccccc">Ln 9, Col 33</div>
<div class="txt" style="left:1456px;top:1058.3px;font-size:13.8px;color:#cccccc">Spaces: 4</div>
<div class="txt" style="left:1537px;top:1057.9px;font-size:14.3px;color:#cccccc">UTF-8</div>
<div class="txt" style="left:1597px;top:1059px;font-size:13px;color:#cccccc">CRLF</div>
<div class="txt" style="left:1675px;top:1057.9px;font-size:14.3px;color:#cccccc">HTML</div>
<div class="txt" style="left:1793px;top:1057.9px;font-size:14.3px;color:#cccccc">Port : 5500</div>

<!-- icons overlay -->
<svg class="abs" style="left:0;top:0" width="1920" height="1080" viewBox="0 0 1920 1080">
 <!-- VS Code logo -->
 <g transform="translate(12,11) scale(0.2)">
  <path fill="#0a78c4" d="M96.46 10.8L75.86.87a6.23 6.23 0 0 0-7.1 1.21L1.36 63.58a4.17 4.17 0 0 0 0 6.16l5.51 5.01a4.16 4.16 0 0 0 5.32.24L93.4 12.8c2.7-2.05 6.6-.13 6.6 3.27V15.8a6.25 6.25 0 0 0-3.54-5z"/>
  <path fill="#0c8ad8" d="M96.46 89.2L75.86 99.13a6.23 6.23 0 0 1-7.1-1.21L1.36 36.42a4.17 4.17 0 0 1 0-6.16l5.51-5.01a4.16 4.16 0 0 1 5.32-.24L93.4 87.2c2.7 2.05 6.6.13 6.6-3.27v.27a6.25 6.25 0 0 1-3.54 5z"/>
  <path fill="#24a6f0" d="M75.86 99.13a6.23 6.23 0 0 1-7.1-1.21c2.3 2.3 6.24.67 6.24-2.58V4.66c0-3.25-3.94-4.88-6.24-2.58a6.23 6.23 0 0 1 7.1-1.21l20.6 9.92A6.25 6.25 0 0 1 100 16.4v67.2a6.25 6.25 0 0 1-3.54 5.6z"/>
 </g>
 <g fill="none" stroke="#cccccc" stroke-width="1.3" stroke-linecap="round" stroke-linejoin="round">
  <!-- back arrow -->
  <path d="M536.5 21.5H551.5M536.5 21.5L542.8 15.2M536.5 21.5L542.8 27.8"/>
  <!-- search -->
  <circle cx="943.5" cy="18.7" r="5.8"/>
  <path d="M947.8 23L954.5 29.3"/>
 </g>
 <path d="M583.5 21.5H568.5M583.5 21.5L577.2 15.2M583.5 21.5L577.2 27.8" fill="none" stroke="#7f7f7f" stroke-width="1.3" stroke-linecap="round"/>
 <!-- copilot chat -->
 <g fill="none" stroke="#cccccc" stroke-width="1.4" stroke-linejoin="miter">
  <path d="M1360 13.8H1352.6V25H1355.3V29L1359.5 25H1366.2"/>
  <path d="M1376 18.8L1380.4 22.8L1384.8 18.8" stroke-width="1.2"/>
 </g>
 <path fill="#cccccc" d="M1363.3 10.6L1364.6 14.1L1368 15.4L1364.6 16.7L1363.3 20.2L1362 16.7L1358.6 15.4L1362 14.1Z"/>
 <path fill="#cccccc" d="M1367.3 17.8L1368.2 20.5L1370.8 21.5L1368.2 22.5L1367.3 25.2L1366.4 22.5L1363.8 21.5L1366.4 20.5Z"/>
 <!-- layout icons -->
 <g fill="none" stroke="#cccccc" stroke-width="1.5">
  <rect x="1624.3" y="13.8" width="6.6" height="14.2" rx="2"/>
  <rect x="1634.3" y="13.8" width="5.5" height="5.5" rx="1.8"/>
  <rect x="1634.3" y="22.5" width="5.5" height="5.5" rx="1.8"/>
  <rect x="1655.6" y="12.6" width="16.6" height="16.8" rx="2.5"/>
  <path d="M1662.2 12.6V29.4"/>
  <rect x="1687.9" y="12.6" width="16.6" height="16.8" rx="2.5"/>
  <path d="M1687.9 24H1704.5"/>
  <rect x="1720.6" y="12.6" width="16.6" height="16.8" rx="2.5"/>
  <path d="M1730.8 12.6V29.4"/>
 </g>
 <!-- window controls -->
 <g fill="none" stroke="#cccccc" stroke-width="1">
  <path d="M1771 20.5H1784"/>
  <rect x="1827.7" y="17.8" width="10" height="10" rx="1.5"/>
  <path d="M1830.3 15.5H1838.5Q1840.3 15.5 1840.3 17.3V25"/>
  <path d="M1885 15L1898 28M1898 15L1885 28"/>
 </g>
 <!-- editor actions -->
 <g fill="none" stroke="#cccccc" stroke-width="1.4" stroke-linejoin="round">
  <path d="M1821.5 59.5V73.8L1832.5 66.6Z"/>
  <rect x="1852.2" y="59.2" width="15" height="14.8" rx="1.5"/>
  <path d="M1859.4 59.2V74"/>
 </g>
 <g fill="#cccccc"><circle cx="1885" cy="66" r="1.3"/><circle cx="1891.3" cy="66" r="1.3"/><circle cx="1897.7" cy="66" r="1.3"/></g>
 <!-- tab close -->
 <path d="M186.2 61.2L197.1 71M197.1 61.2L186.2 71" fill="none" stroke="#ffffff" stroke-width="1.3"/>
 <!-- html5 icons -->
 <g id="h5" transform="translate(75.5,58)">
  <path fill="#ee5408" d="M0.3 0H14.8L13.8 13.4L7.5 15.4L1.3 13.4Z"/>
  <path fill="none" stroke="#1f1f1f" stroke-width="1.45" d="M12.2 3.7H3.7V9H10.9V12.2L7.5 13.3L4.2 12.2V11"/>
 </g>
 <use href="#h5" transform="translate(6.8,35)"/>
 <!-- css icon -->
 <rect x="225.2" y="58.2" width="15.4" height="15.3" rx="2" fill="#8a5cd6"/>
 <text x="227.8" y="71.4" font-family="Liberation Sans" font-size="9" fill="#111111" font-weight="bold" textLength="11" lengthAdjust="spacingAndGlyphs">CSS</text>
 <!-- breadcrumb chevrons -->
 <g fill="none" stroke="#a9a9a9" stroke-width="1.2">
  <path d="M180.6 95.4L187.4 101.2L180.6 107"/>
  <path d="M256.8 95.4L263.6 101.2L256.8 107"/>
  <path d="M337 95.4L343.8 101.2L337 107"/>
 </g>
 <!-- box icons -->
 <g id="box" fill="none" stroke="#75beff" stroke-width="1.35" stroke-linejoin="round">
  <path d="M195.2 98.9L204.55 93.5L211.5 96.9L202.1 101.9Z M195.2 98.9V103.8L202.1 107.9L211.5 103.6V96.9 M202.1 101.9V107.9"/>
 </g>
 <use href="#box" transform="translate(76.6,0)"/>
 <use href="#box" transform="translate(157,0)"/>

 <!-- activity bar icons -->
 <g fill="none" stroke="#919191" stroke-width="1.5" stroke-linejoin="round">
  <!-- explorer -->
  <path d="M23.8 66.9H18.6Q17 66.9 17 68.5V86.8Q17 88.4 18.6 88.4H32.8Q34.3 88.4 34.3 86.8V81"/>
  <path d="M25.9 59.8H36.7L42.1 65V79.4Q42.1 81 40.5 81H25.9Q24.3 81 24.3 79.4V61.4Q24.3 59.8 25.9 59.8Z"/>
  <path d="M36.4 59.8V65.9H42.1" stroke-width="1.3"/>
  <!-- search -->
  <circle cx="26.3" cy="130" r="9.4"/>
  <path d="M33 136.6L43 146.8"/>
  <!-- source control -->
  <circle cx="23.7" cy="183.4" r="3.7"/>
  <circle cx="36.6" cy="189.2" r="3.7"/>
  <circle cx="23.7" cy="204.4" r="3.7"/>
  <path d="M23.7 187.1V200.7M23.7 199Q23.7 197 25.7 197H30.5Q35.4 197 36 192.9"/>
  <!-- run & debug -->
  <path d="M25.4 252.6V239.9L43.8 251.8L32.2 259.3"/>
  <rect x="18.7" y="254.9" width="8.4" height="13.2" rx="4.2"/>
  <path d="M18.7 259.9H27.1M15.3 256.2L18.9 258.3M30.5 256.2L26.9 258.3M15 262.4H18.7M27.1 262.4H30.8M15.3 268L18.9 265.9M30.5 268L26.9 265.9"/>
  <!-- extensions -->
  <path d="M18.4 305.3H30.3V326H18.4Z M18.4 315.6H42V326H30.3"/>
  <path d="M31.4 307.6L37.4 301.6L43.4 307.6L37.4 313.6Z"/>
  <!-- testing flask -->
  <path d="M24.8 362H36.4M26.5 362V371.8L19.4 386.3H41.4L34.3 371.8V362M22.6 379.8H38.2"/>
  <!-- account -->
  <circle cx="30" cy="961" r="14.4"/>
  <circle cx="30" cy="957.8" r="5.9"/>
  <path d="M21 972.3Q22.5 965.6 30 965.6Q37.5 965.6 39 972.3"/>
 </g>
 <!-- gear -->
 <g transform="translate(30,1021)" fill="none" stroke="#919191" stroke-width="1.7" stroke-linejoin="round">
  <path d="M-2.66 -8.60L-2.36 -12.28L2.36 -12.28L2.66 -8.60L4.20 -7.96L7.01 -10.35L10.35 -7.01L7.96 -4.20L8.60 -2.66L12.28 -2.36L12.28 2.36L8.60 2.66L7.96 4.20L10.35 7.01L7.01 10.35L4.20 7.96L2.66 8.60L2.36 12.28L-2.36 12.28L-2.66 8.60L-4.20 7.96L-7.01 10.35L-10.35 7.01L-7.96 4.20L-8.60 2.66L-12.28 2.36L-12.28 -2.36L-8.60 -2.66L-7.96 -4.20L-10.35 -7.01L-7.01 -10.35L-4.20 -7.96Z"/>
  <circle cx="0" cy="0" r="3.4"/>
 </g>

 <!-- status bar icons -->
 <path d="M16.2 1060.8L21.4 1065.6L16.2 1070.4M26.8 1056.6L21.8 1061.2L26.8 1065.6" fill="none" stroke="#ffffff" stroke-width="1.3"/>
 <g fill="none" stroke="#cccccc" stroke-width="1.2">
  <circle cx="61.3" cy="1063.8" r="7.6"/>
  <path d="M58.3 1060.8L64.3 1066.8M64.3 1060.8L58.3 1066.8"/>
  <path d="M95.2 1056.8L102.8 1070.3H87.6Z"/>
  <path d="M95.2 1061.2V1066" stroke-width="1"/>
  <path d="M1656 1057.3Q1653.8 1057.3 1653.8 1059.3V1061.8Q1653.8 1063.8 1652 1063.8Q1653.8 1063.8 1653.8 1065.8V1068.3Q1653.8 1070.4 1656 1070.4"/>
  <path d="M1662 1057.3Q1664.2 1057.3 1664.2 1059.3V1061.8Q1664.2 1063.8 1666 1063.8Q1664.2 1063.8 1664.2 1065.8V1068.3Q1664.2 1070.4 1662 1070.4"/>
  <circle cx="1780.3" cy="1063.8" r="7.6"/>
  <path d="M1775 1069L1785.6 1058.5"/>
  <path d="M1887 1068.9H1899.6M1888 1068.9V1061.5Q1888 1056.7 1893.2 1056.7M1898.4 1063.6V1068.9M1891.1 1069.6Q1892.8 1072.4 1894.5 1069.6"/>
 </g>
 <circle cx="1897.3" cy="1059.6" r="3.3" fill="#cccccc"/>
 <!-- copilot status icon -->
 <g fill="none" stroke="#cccccc" stroke-width="1.5">
  <rect x="1736" y="1056.6" width="6.6" height="6.4" rx="2.8"/>
  <rect x="1743.4" y="1056.6" width="6.6" height="6.4" rx="2.8"/>
  <path d="M1735.2 1064Q1734.2 1065 1734.2 1067Q1734.2 1071.2 1743 1071.2Q1751.8 1071.2 1751.8 1067Q1751.8 1065 1750.8 1064"/>
 </g>
 <g fill="#cccccc"><rect x="1739.9" y="1065.6" width="1.5" height="2.8"/><rect x="1744.6" y="1065.6" width="1.5" height="2.8"/></g>
</svg>
</body>
</html>
